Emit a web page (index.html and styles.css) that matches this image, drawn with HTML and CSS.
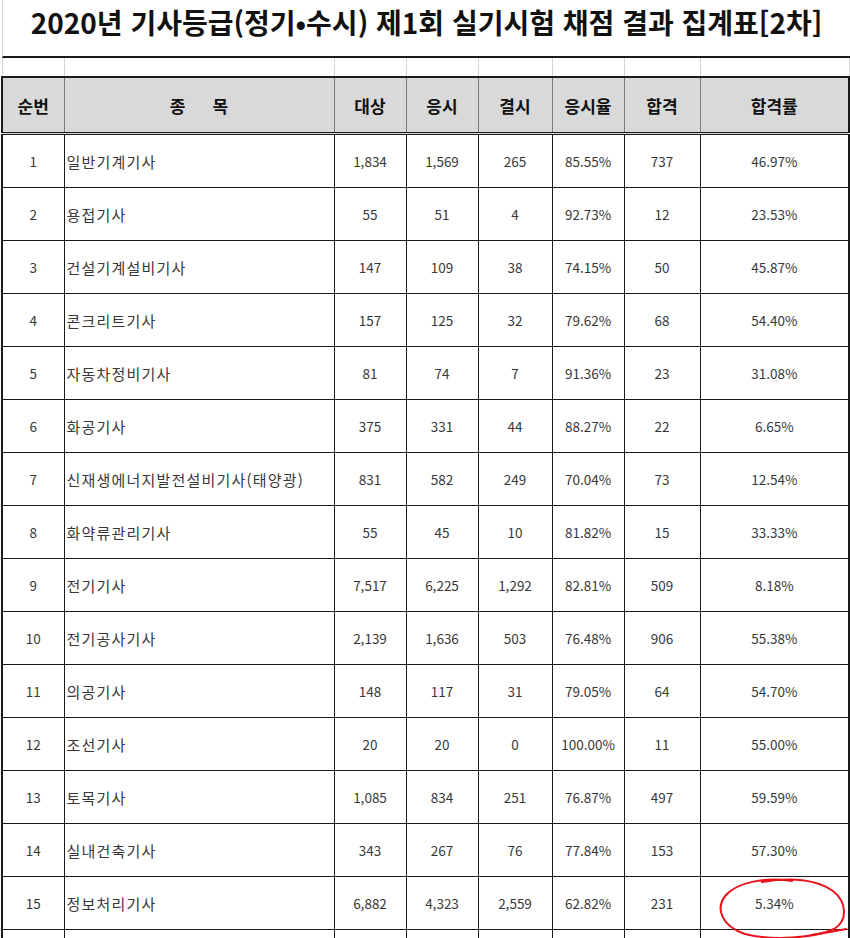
FILE: index.html
```html
<!DOCTYPE html>
<html lang="ko">
<head>
<meta charset="utf-8">
<title>2020년 기사등급 실기시험 채점 결과 집계표</title>
<link rel="stylesheet" href="styles.css">
</head>
<body>
<div class="sheet">
  <div class="title">2020년 기사등급(정기•수시) 제1회 실기시험 채점 결과 집계표[2차]</div>
  <table class="grid">
    <colgroup>
      <col class="c1"><col class="c2"><col class="c3"><col class="c4"><col class="c5"><col class="c6"><col class="c7"><col class="c8">
    </colgroup>
    <tbody>
      <tr class="spacer"><td></td><td></td><td></td><td></td><td></td><td></td><td></td><td></td></tr>
      <tr class="head">
        <th>순번</th><th>종<span class="gap"></span>목</th><th>대상</th><th>응시</th><th>결시</th><th>응시율</th><th>합격</th><th>합격률</th>
      </tr>
      <tr><td>1</td><td class="name">일반기계기사</td><td>1,834</td><td>1,569</td><td>265</td><td>85.55%</td><td>737</td><td>46.97%</td></tr>
      <tr><td>2</td><td class="name">용접기사</td><td>55</td><td>51</td><td>4</td><td>92.73%</td><td>12</td><td>23.53%</td></tr>
      <tr><td>3</td><td class="name">건설기계설비기사</td><td>147</td><td>109</td><td>38</td><td>74.15%</td><td>50</td><td>45.87%</td></tr>
      <tr><td>4</td><td class="name">콘크리트기사</td><td>157</td><td>125</td><td>32</td><td>79.62%</td><td>68</td><td>54.40%</td></tr>
      <tr><td>5</td><td class="name">자동차정비기사</td><td>81</td><td>74</td><td>7</td><td>91.36%</td><td>23</td><td>31.08%</td></tr>
      <tr><td>6</td><td class="name">화공기사</td><td>375</td><td>331</td><td>44</td><td>88.27%</td><td>22</td><td>6.65%</td></tr>
      <tr><td>7</td><td class="name">신재생에너지발전설비기사(태양광)</td><td>831</td><td>582</td><td>249</td><td>70.04%</td><td>73</td><td>12.54%</td></tr>
      <tr><td>8</td><td class="name">화약류관리기사</td><td>55</td><td>45</td><td>10</td><td>81.82%</td><td>15</td><td>33.33%</td></tr>
      <tr><td>9</td><td class="name">전기기사</td><td>7,517</td><td>6,225</td><td>1,292</td><td>82.81%</td><td>509</td><td>8.18%</td></tr>
      <tr><td>10</td><td class="name">전기공사기사</td><td>2,139</td><td>1,636</td><td>503</td><td>76.48%</td><td>906</td><td>55.38%</td></tr>
      <tr><td>11</td><td class="name">의공기사</td><td>148</td><td>117</td><td>31</td><td>79.05%</td><td>64</td><td>54.70%</td></tr>
      <tr><td>12</td><td class="name">조선기사</td><td>20</td><td>20</td><td>0</td><td>100.00%</td><td>11</td><td>55.00%</td></tr>
      <tr><td>13</td><td class="name">토목기사</td><td>1,085</td><td>834</td><td>251</td><td>76.87%</td><td>497</td><td>59.59%</td></tr>
      <tr><td>14</td><td class="name">실내건축기사</td><td>343</td><td>267</td><td>76</td><td>77.84%</td><td>153</td><td>57.30%</td></tr>
      <tr><td>15</td><td class="name">정보처리기사</td><td>6,882</td><td>4,323</td><td>2,559</td><td>62.82%</td><td>231</td><td>5.34%</td></tr>
      <tr><td></td><td></td><td></td><td></td><td></td><td></td><td></td><td></td></tr>
    </tbody>
  </table>
  <svg class="mark" width="850" height="938" viewBox="0 0 850 938" aria-hidden="true">
    <path d="M792 881 C765 877 738 882 726 895 C715 908 721 926 745 934 C772 941 815 938 834 929 C848 921 847 902 833 891 C817 880 792 877 762 882" fill="none" stroke="#e8141c" stroke-width="2" stroke-linecap="round"/>
    <path d="M812 935 C825 933 836 931 846 929" fill="none" stroke="#e8141c" stroke-width="2" stroke-linecap="round"/>
  </svg>
</div>
</body>
</html>
```

FILE: styles.css
```css
html, body {
  margin: 0;
  padding: 0;
  background: #fff;
}

.sheet {
  position: relative;
  width: 850px;
  height: 938px;
  overflow: hidden;
}

.title {
  margin-left: 2px;
  height: 56px;
  border-left: 1px solid #d4d4d4;
  border-bottom: 2px solid #1a1a1a;
  font-family: "Noto Sans CJK KR", "Noto Sans", sans-serif;
  font-weight: 700;
  font-size: 28px;
  line-height: 44px;
  text-align: center;
  color: #111;
  white-space: nowrap;
}

.grid {
  margin-left: 1px;
  width: 847px;
  table-layout: fixed;
  border-collapse: collapse;
  font-family: "Noto Sans CJK KR", "Noto Sans", sans-serif;
}

.c1 { width: 62px; }
.c2 { width: 270px; }
.c3 { width: 72px; }
.c4 { width: 72px; }
.c5 { width: 74px; }
.c6 { width: 72px; }
.c7 { width: 76px; }
.c8 { width: 149px; }

.grid td,
.grid th {
  padding: 0;
  text-align: center;
  vertical-align: middle;
}

.grid td {
  height: 52px;
  border: 1px solid #1a1a1a;
  font-size: 13.5px;
  color: #383838;
}

.grid td:first-child {
  border-left: 2px solid #1a1a1a;
}

.grid td:last-child {
  border-right: 2px solid #1a1a1a;
}

.grid td.name {
  text-align: left;
  padding-left: 2px;
  font-size: 15px;
  letter-spacing: 1.2px;
  white-space: nowrap;
}

.grid .spacer td {
  height: 18px;
  border: 1px solid #d4d4d4;
  border-top: none;
}

.grid .head th {
  height: 54px;
  background: #d9d9d9;
  border: 1px solid #7a7a7a;
  border-top: 2px solid #1a1a1a;
  border-bottom: 3px double #1a1a1a;
  font-size: 17px;
  font-weight: 700;
  color: #111;
}

.grid .head th:first-child {
  border-left: 2px solid #1a1a1a;
}

.grid .head th:last-child {
  border-right: 2px solid #1a1a1a;
}

.gap {
  display: inline-block;
  width: 27px;
}

.mark {
  position: absolute;
  left: 0;
  top: 0;
  pointer-events: none;
}
```
